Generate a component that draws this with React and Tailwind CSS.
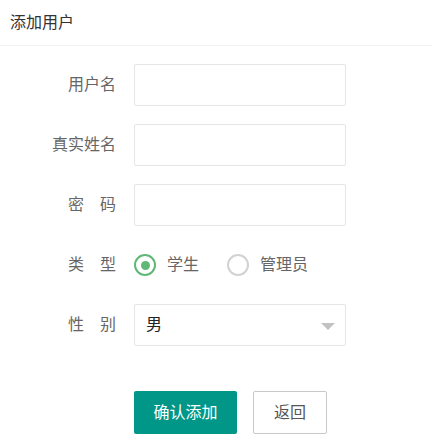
import { useState } from 'react'

const font = { fontFamily: '"Liberation Sans", "Noto Sans CJK SC", sans-serif' }

function Row({ label, children }) {
  return (
    <div className="flex items-center h-[42px]">
      <div className="w-[116px] text-right text-[16px] text-[#666] whitespace-pre">{label}</div>
      <div className="ml-[18px] flex items-center h-full">{children}</div>
    </div>
  )
}

function Radio({ checked, label, onClick }) {
  return (
    <button type="button" onClick={onClick} className="flex items-center mr-[28px] cursor-pointer">
      <span
        className={
          checked
            ? 'w-[22px] h-[22px] rounded-full border-2 border-[#5FB878] flex items-center justify-center'
            : 'w-[22px] h-[22px] rounded-full border-2 border-[#d2d2d2] flex items-center justify-center'
        }
      >
        {checked && <span className="w-[9px] h-[9px] rounded-full bg-[#5FB878]" />}
      </span>
      <span className="ml-[11px] text-[16px] text-[#666]">{label}</span>
    </button>
  )
}

export default function App() {
  const [type, setType] = useState('student')

  return (
    <div className="w-[432px] h-[442px] bg-white" style={font}>
      {/* 标题 */}
      <div className="h-[46px] px-[10px] flex items-center border-b border-[#f2f2f2] text-[16px] text-[#333]">
        添加用户
      </div>

      <div className="pt-[18px] flex flex-col gap-[18px]">
        <Row label="用户名">
          <input className="w-[212px] h-[42px] border border-[#e6e6e6] rounded-[2px] px-[10px] outline-none" />
        </Row>
        <Row label="真实姓名">
          <input className="w-[212px] h-[42px] border border-[#e6e6e6] rounded-[2px] px-[10px] outline-none" />
        </Row>
        <Row label={'密　码'}>
          <input type="password" className="w-[212px] h-[42px] border border-[#e6e6e6] rounded-[2px] px-[10px] outline-none" />
        </Row>
        <Row label={'类　型'}>
          <Radio checked={type === 'student'} label="学生" onClick={() => setType('student')} />
          <Radio checked={type === 'admin'} label="管理员" onClick={() => setType('admin')} />
        </Row>
        <Row label={'性　别'}>
          <div className="w-[212px] h-[42px] border border-[#e6e6e6] rounded-[2px] pl-[11px] pr-[10px] flex items-center justify-between">
            <span className="text-[16px] text-[#222]">男</span>
            <span className="w-0 h-0 border-l-[7px] border-r-[7px] border-t-[7px] border-l-transparent border-r-transparent border-t-[#c2c2c2] mt-[2px]" />
          </div>
        </Row>
      </div>

      {/* 按钮 */}
      <div className="mt-[45px] ml-[134px] flex gap-[16px]">
        <button className="w-[103px] h-[43px] bg-[#009688] text-white text-[16px] rounded-[2px]">确认添加</button>
        <button className="w-[74px] h-[43px] bg-white border border-[#c9c9c9] text-[#555] text-[16px] rounded-[2px]">返回</button>
      </div>
    </div>
  )
}
